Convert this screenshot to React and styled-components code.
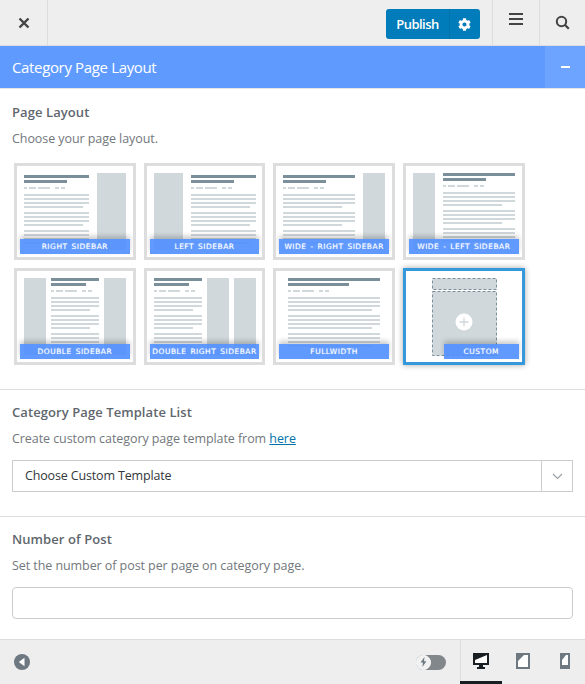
import React from 'react';
import styled, { createGlobalStyle } from 'styled-components';
import { FaCog } from 'react-icons/fa';

const LINE = '#d0d8dc';
const HEAD = '#7a8f9a';

const layouts = [
  { name: 'RIGHT SIDEBAR', x: 10, w: 65, sub: 43, short: 59, top: 12, bars: [[83, 29]] },
  { name: 'LEFT SIDEBAR', x: 47, w: 65, sub: 43, short: 59, top: 12, bars: [[10, 29]] },
  { name: 'WIDE - RIGHT SIDEBAR', x: 10, w: 72, sub: 43, short: 59, top: 12, bars: [[90, 22]] },
  { name: 'WIDE - LEFT SIDEBAR', x: 40, w: 72, sub: 43, short: 59, top: 10, bars: [[10, 22]] },
  { name: 'DOUBLE SIDEBAR', x: 37, w: 48, sub: 35, short: 39, top: 10, bars: [[10, 22], [90, 22]] },
  { name: 'DOUBLE RIGHT SIDEBAR', x: 10, w: 48, sub: 35, short: 39, top: 10, bars: [[63, 22], [90, 22]] },
  { name: 'FULLWIDTH', x: 15, w: 92, sub: 61, short: 84, top: 10, bars: [] },
];

function Wireframe({ x, w, sub, short, top, bars }) {
  const dashes = [[0, 3], [5, 7], [14, 12], [31, 4], [37, 4]];
  const paragraphs = [top + 19, top + 37, top + 55];
  return (
    <svg viewBox="3 3 116 91" width="116" height="91">
      {bars.map(([bx, bw]) => (
        <rect key={bx} x={bx} y="10" width={bw} height="77" fill={LINE} />
      ))}
      <rect x={x} y={top} width={w} height="3" fill={HEAD} />
      <rect x={x} y={top + 5} width={sub} height="3" fill={HEAD} />
      {dashes.map(([dx, dw]) => (
        <rect key={dx} x={x + dx} y={top + 12} width={dw} height="2" fill={LINE} />
      ))}
      {paragraphs.map(py => (
        <g key={py} fill={LINE}>
          <rect x={x} y={py} width={w} height="2" />
          <rect x={x} y={py + 4} width={w} height="2" />
          <rect x={x} y={py + 8} width={w} height="2" />
          <rect x={x} y={py + 12} width={short} height="2" />
        </g>
      ))}
    </svg>
  );
}

function CustomWireframe() {
  return (
    <svg viewBox="3 3 116 91" width="116" height="91">
      <rect x="29.5" y="10.5" width="64" height="11" fill={LINE} stroke={HEAD} strokeDasharray="3 2" />
      <rect x="29.5" y="23.5" width="64" height="64" fill={LINE} stroke={HEAD} strokeDasharray="3 2" />
      <circle cx="61" cy="54" r="8.5" fill="#fff" />
      <path d="M61 49.5v9M56.5 54h9" stroke={LINE} strokeWidth="1.3" />
    </svg>
  );
}

function Monitor() {
  return (
    <svg width="16" height="16" viewBox="0 0 16 16">
      <path d="M0 0h16v12h-6v2h2v2H4v-2h2v-2H0z" fill="#191e23" />
      <path d="M2 2h12v8H2z" fill="#fff" />
      <path d="M2 2h12L2 7z" fill="#191e23" />
    </svg>
  );
}

function Tablet() {
  return (
    <svg width="14" height="16" viewBox="0 0 14 16">
      <path d="M0 0h14v16H0z" fill="#6d7880" />
      <path d="M2 2h10v12H2z" fill="#fff" />
      <path d="M2 2h6L2 8z" fill="#6d7880" />
    </svg>
  );
}

function Phone() {
  return (
    <svg width="10" height="16" viewBox="0 0 10 16">
      <path d="M0 0h10v16H0z" fill="#6d7880" />
      <path d="M2 2h6v10H2z" fill="#fff" />
      <path d="M2 2h4L2 7z" fill="#6d7880" />
    </svg>
  );
}

export default function App() {
  return (
    <>
      <GlobalStyle />
      <Page>
        <Header>
          <CloseButton>
            <svg width="12" height="12" viewBox="0 0 12 12">
              <path d="M1.5 1.5l9 9M10.5 1.5l-9 9" stroke="#444" strokeWidth="2.4" fill="none" />
            </svg>
          </CloseButton>
          <PublishButton>
            <PublishLabel>Publish</PublishLabel>
            <PublishGear><FaCog size={13} /></PublishGear>
          </PublishButton>
          <HeaderButton $width={47}>
            <Burger />
          </HeaderButton>
          <HeaderButton $width={46}>
            <svg width="15" height="15" viewBox="0 0 15 15">
              <circle cx="6.5" cy="6.5" r="4.7" fill="none" stroke="#444" strokeWidth="2" />
              <path d="M10 10l3.8 3.8" stroke="#444" strokeWidth="2.2" />
            </svg>
          </HeaderButton>
        </Header>

        <Banner>
          <BannerTitle>Category Page Layout</BannerTitle>
          <BannerToggle><Minus /></BannerToggle>
        </Banner>

        <Content>
          <Section>
            <Title>Page Layout</Title>
            <Description>Choose your page layout.</Description>
            <TileGrid>
              {layouts.map(({ name, ...frame }) => (
                <Tile key={name}>
                  <Wireframe {...frame} />
                  <TileLabel>{name}</TileLabel>
                </Tile>
              ))}
              <Tile $selected>
                <CustomWireframe />
                <TileLabel $left={38}>CUSTOM</TileLabel>
              </Tile>
            </TileGrid>
          </Section>

          <Section $height={127}>
            <Title>Category Page Template List</Title>
            <Description>
              Create custom category page template from <HereLink href="#">here</HereLink>
            </Description>
            <SelectBox>
              <SelectValue>Choose Custom Template</SelectValue>
              <SelectArrow>
                <svg width="11" height="7" viewBox="0 0 11 7">
                  <path d="M1 1l4.5 4.5L10 1" fill="none" stroke="#9aa1a7" strokeWidth="1.2" />
                </svg>
              </SelectArrow>
            </SelectBox>
          </Section>

          <Section $last>
            <Title>Number of Post</Title>
            <Description>Set the number of post per page on category page.</Description>
            <NumberInput />
          </Section>
        </Content>

        <Footer>
          <BackIcon>
            <svg width="16" height="16" viewBox="0 0 16 16">
              <circle cx="8" cy="8" r="8" fill="#6d7880" />
              <path d="M10.5 3.8v8.4L4.8 8z" fill="#fff" />
            </svg>
          </BackIcon>
          <ToggleTrack>
            <ToggleKnob>
              <svg width="7" height="10" viewBox="0 0 7 10">
                <path d="M4.5 0L.5 5.6h2.4L2.4 10l4-5.8H4z" fill="#6d7880" />
              </svg>
            </ToggleKnob>
          </ToggleTrack>
          <DeviceGroup>
            <DeviceButton $active><Monitor /></DeviceButton>
            <DeviceButton><Tablet /></DeviceButton>
            <DeviceButton><Phone /></DeviceButton>
          </DeviceGroup>
        </Footer>
      </Page>
    </>
  );
}

// Styled Components
const GlobalStyle = createGlobalStyle`
  html, body {
    margin: 0;
    padding: 0;
    background: #fff;
  }
  * {
    box-sizing: border-box;
  }
`;

const Page = styled.div`
  display: flex;
  flex-direction: column;
  width: 585px;
  height: 684px;
  overflow: hidden;
  font-family: "Open Sans", "Noto Sans", sans-serif;
  color: #555d66;
`;

const Header = styled.div`
  display: flex;
  align-items: stretch;
  flex: 0 0 46px;
  background: #eee;
  border-bottom: 1px solid #ddd;
`;

const CloseButton = styled.div`
  display: flex;
  align-items: center;
  justify-content: center;
  width: 48px;
  margin-right: auto;
  border-right: 1px solid #ddd;
`;

const PublishButton = styled.div`
  display: flex;
  align-self: flex-start;
  width: 94px;
  height: 30px;
  margin: 9px 12px 0 0;
  color: #fff;
  background: #007cba;
  border-radius: 3px;
`;

const PublishLabel = styled.span`
  flex: 0 0 64px;
  font-size: 13px;
  font-weight: 600;
  line-height: 30px;
  letter-spacing: -0.5px;
  text-align: center;
  border-right: 1px solid #0073ad;
`;

const PublishGear = styled.span`
  display: flex;
  flex: 1;
  align-items: center;
  justify-content: center;
  padding-right: 2px;
`;

const HeaderButton = styled.div`
  display: flex;
  align-items: center;
  justify-content: center;
  width: ${props => props.$width}px;
  border-left: 1px solid #ddd;
`;

const Burger = styled.span`
  display: block;
  width: 14px;
  height: 12px;
  margin-top: -7px;
  border-top: 2px solid #444;
  border-bottom: 2px solid #444;
  background: linear-gradient(#444, #444) center / 100% 2px no-repeat;
`;

const Banner = styled.div`
  display: flex;
  flex: 0 0 43px;
  align-items: stretch;
  color: #fff;
  background: #5f9bff;
  border-bottom: 1px solid #e5e5e5;
`;

const BannerTitle = styled.h2`
  flex: 1;
  margin: 0;
  padding-left: 12px;
  font-size: 15px;
  font-weight: 400;
  line-height: 42px;
  letter-spacing: -0.35px;
`;

const BannerToggle = styled.div`
  display: flex;
  align-items: center;
  justify-content: center;
  width: 40px;
  background: #6ca4ff;
`;

const Minus = styled.span`
  display: block;
  width: 9px;
  height: 2px;
  background: #fff;
`;

const Content = styled.div`
  flex: 1;
  min-height: 0;
`;

const Section = styled.section`
  height: ${props => (props.$height ? `${props.$height}px` : 'auto')};
  padding: 12px 12px 0;
  border-bottom: ${props => (props.$last ? 'none' : '1px solid #ddd')};

  &:first-child {
    height: 301px;
    padding-top: 13px;
  }
`;

const Title = styled.h3`
  margin: 0;
  font-size: 13px;
  font-weight: 600;
  line-height: 20px;
  letter-spacing: 0.08px;
  color: #5f666d;
`;

const Description = styled.p`
  margin: 7px 0 0;
  font-size: 12.5px;
  line-height: 20px;
  letter-spacing: -0.07px;
  color: #72777c;
`;

const TileGrid = styled.div`
  display: grid;
  grid-template-columns: repeat(4, 121.67px);
  grid-auto-rows: 97px;
  gap: 8px;
  margin: 14px 0 0 2px;
`;

const Tile = styled.div`
  position: relative;
  overflow: hidden;
  background: #fff;
  border: 3px solid ${props => (props.$selected ? '#3498db' : '#ddd')};
  box-shadow: ${props => (props.$selected ? '0 0 6px rgba(0, 0, 0, 0.35)' : 'none')};

  svg {
    display: block;
  }
`;

const TileLabel = styled.span`
  position: absolute;
  left: ${props => props.$left || 3}px;
  right: 3px;
  bottom: 3px;
  height: 15px;
  font-family: "DejaVu Sans", sans-serif;
  font-size: 7.5px;
  font-weight: 400;
  line-height: 15px;
  letter-spacing: 0.5px;
  word-spacing: 1px;
  text-align: center;
  white-space: nowrap;
  color: #fff;
  text-shadow: 0 0 1px rgba(255, 255, 255, 0.6);
  background: rgba(79, 143, 255, 0.9);
  box-shadow: 0 -3px 5px rgba(0, 0, 0, 0.2);
`;

const HereLink = styled.a`
  color: #0073aa;
  text-decoration: underline;
`;

const SelectBox = styled.div`
  display: flex;
  height: 32px;
  margin-top: 11px;
  background: #fff;
  border: 1px solid #ccc;
`;

const SelectValue = styled.span`
  flex: 1;
  padding-left: 12px;
  font-size: 12.5px;
  line-height: 30px;
  letter-spacing: -0.15px;
  color: #32373c;
`;

const SelectArrow = styled.span`
  display: flex;
  flex: 0 0 31px;
  align-items: center;
  justify-content: center;
  border-left: 1px solid #ccc;
`;

const NumberInput = styled.input`
  display: block;
  width: 100%;
  height: 32px;
  margin-top: 11px;
  border: 1px solid #ccc;
  border-radius: 4px;
  background: #fff;
`;

const Footer = styled.div`
  display: flex;
  flex: 0 0 45px;
  align-items: center;
  background: #eee;
  border-top: 1px solid #ddd;
`;

const BackIcon = styled.span`
  display: flex;
  margin-left: 14px;
  margin-right: auto;
`;

const ToggleTrack = styled.span`
  display: flex;
  align-items: center;
  width: 30px;
  height: 15px;
  margin-right: 14px;
  background: #82878c;
  border-radius: 8px;
`;

const ToggleKnob = styled.span`
  display: flex;
  align-items: center;
  justify-content: center;
  width: 15px;
  height: 15px;
  background: #f1f1f1;
  border: 1px solid #fff;
  border-radius: 50%;
`;

const DeviceGroup = styled.div`
  display: flex;
  align-self: stretch;
  width: 125px;
  box-shadow: inset 1px 0 0 #ddd;
`;

const DeviceButton = styled.span`
  display: flex;
  flex: 0 0 42px;
  align-items: center;
  justify-content: center;
  padding-top: 1px;
  border-bottom: 3px solid ${props => (props.$active ? '#191e23' : 'transparent')};
`;
